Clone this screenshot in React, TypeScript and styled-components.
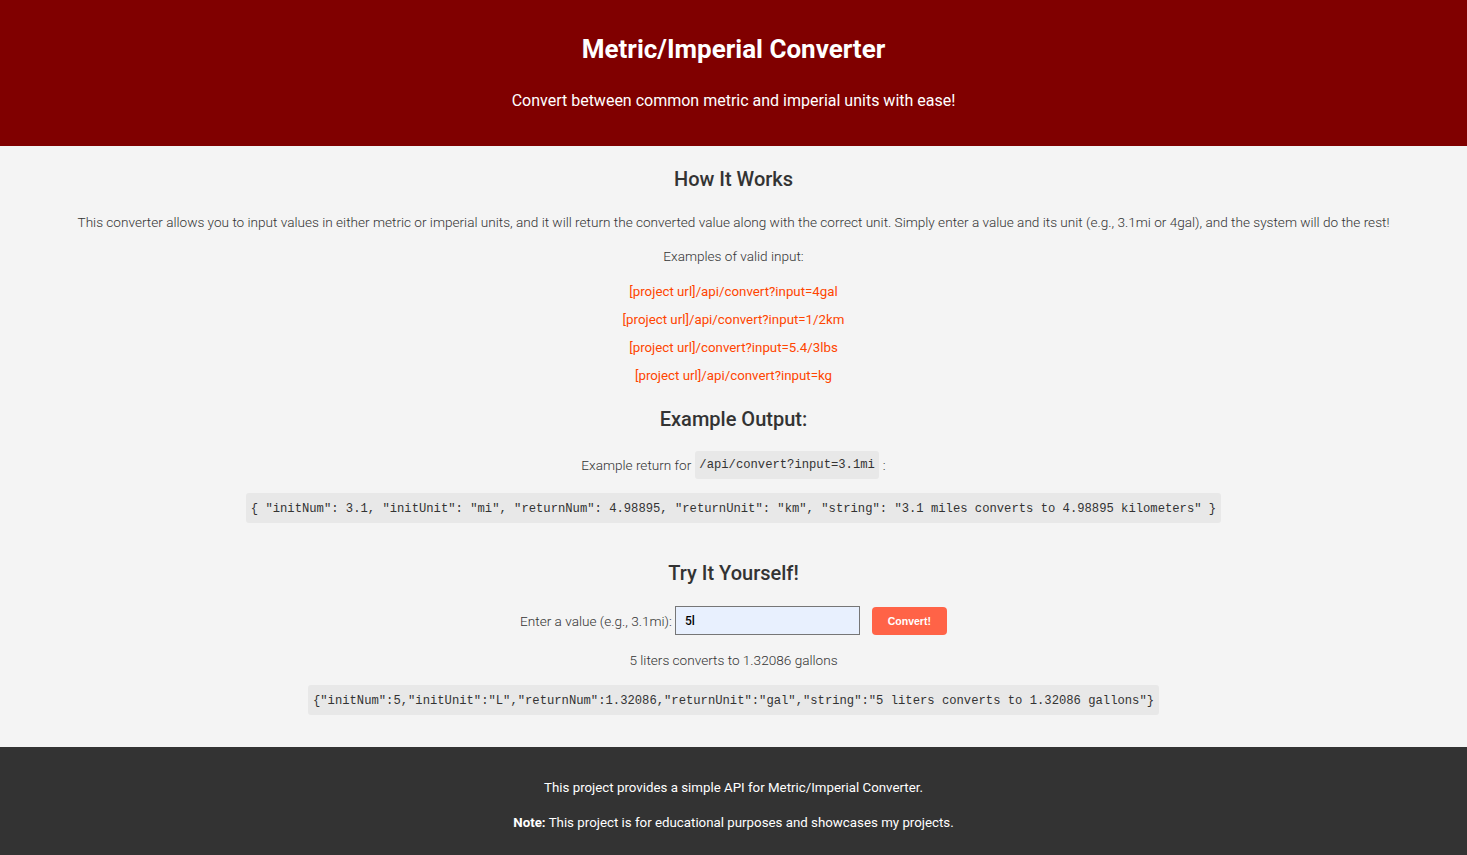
import styled, { createGlobalStyle } from "styled-components";

const GlobalStyle = createGlobalStyle`
  * {
    box-sizing: border-box;
  }

  body {
    margin: 0;
    font-family: Roboto, "Liberation Sans", Arial, sans-serif;
    background-color: #f4f4f4;
    color: #333;
  }
`;

const Header = styled.header`
  background-color: #800000;
  color: #fff;
  text-align: center;
  padding: 32px 20px 35px;
`;

const Title = styled.h1`
  margin: 0;
  font-size: 26px;
  line-height: 34px;
  font-weight: 700;
`;

const Subtitle = styled.p`
  margin: 25px 0 0;
  font-size: 16px;
  line-height: 20px;
`;

const Main = styled.main`
  display: flex;
  flex-direction: column;
  align-items: center;
  text-align: center;
  padding: 21px 20px 32px;
`;

const SectionTitle = styled.h2<{ $top?: number }>`
  margin: ${(p) => p.$top ?? 0}px 0 0;
  font-size: 20px;
  line-height: 24px;
  font-weight: 500;
  color: #333;
`;

const Text = styled.p<{ $top: number }>`
  margin: ${(p) => p.$top}px 0 0;
  font-size: 13.6px;
  line-height: 16px;
  font-weight: 300;
  color: #333;
`;

const Examples = styled.ul`
  list-style: none;
  margin: 19px 0 0;
  padding: 0;
  display: flex;
  flex-direction: column;
  gap: 10px;
`;

const ExampleLink = styled.li`
  font-size: 13.3px;
  line-height: 18px;
  color: #ff4500;
`;

const ReturnRow = styled.p`
  margin: 20px 0 0;
  display: flex;
  align-items: center;
  gap: 4px;
  font-size: 13.6px;
  font-weight: 300;
  line-height: 16px;
`;

const InlineCode = styled.code`
  font-family: "Liberation Mono", "DejaVu Sans Mono", monospace;
  font-size: 12.2px;
  background-color: #e8e8e8;
  padding: 6px 4px;
  line-height: 16px;
  border-radius: 3px;
`;

const CodeBlock = styled.pre<{ $top: number }>`
  margin: ${(p) => p.$top}px 0 0;
  font-family: "Liberation Mono", "DejaVu Sans Mono", monospace;
  font-size: 12.2px;
  line-height: 16px;
  background-color: #e8e8e8;
  padding: 8px 5px 6px;
  border-radius: 3px;
  color: #333;
  white-space: pre;
`;

const Form = styled.form`
  margin: 21px 0 0;
  display: flex;
  align-items: center;
  font-size: 13.6px;
  font-weight: 300;
`;

const Label = styled.label`
  margin-right: 3px;
`;

const Input = styled.input`
  width: 185px;
  height: 29px;
  padding: 0 9px;
  border: 1px solid #767676;
  background-color: #e8f0fe;
  font-family: Roboto, "Liberation Sans", Arial, sans-serif;
  font-size: 12px;
  font-weight: 500;
  color: #000;
  outline: none;
`;

const Button = styled.button`
  margin-left: 12px;
  width: 75px;
  height: 28px;
  border: none;
  border-radius: 4px;
  background-color: #ff6347;
  color: #fff;
  font-family: "Liberation Sans", Arial, sans-serif;
  font-size: 10.5px;
  font-weight: 700;
  cursor: pointer;
`;

const Footer = styled.footer`
  background-color: #333;
  color: #fff;
  text-align: center;
  padding: 33px 20px 24px;
  font-size: 13.3px;
  line-height: 16px;
`;

const FooterText = styled.p<{ $top: number }>`
  margin: ${(p) => p.$top}px 0 0;
`;

const examples = [
  "[project url]/api/convert?input=4gal",
  "[project url]/api/convert?input=1/2km",
  "[project url]/convert?input=5.4/3lbs",
  "[project url]/api/convert?input=kg",
];

export default function App() {
  return (
    <>
      <GlobalStyle />
      <Header>
        <Title>Metric/Imperial Converter</Title>
        <Subtitle>Convert between common metric and imperial units with ease!</Subtitle>
      </Header>
      <Main>
        <SectionTitle>How It Works</SectionTitle>
        <Text $top={23}>
          This converter allows you to input values in either metric or imperial units, and it will
          return the converted value along with the correct unit. Simply enter a value and its unit
          (e.g., 3.1mi or 4gal), and the system will do the rest!
        </Text>
        <Text $top={18}>Examples of valid input:</Text>
        <Examples>
          {examples.map((ex) => (
            <ExampleLink key={ex}>{ex}</ExampleLink>
          ))}
        </Examples>
        <SectionTitle $top={22}>Example Output:</SectionTitle>
        <ReturnRow>
          Example return for <InlineCode>/api/convert?input=3.1mi</InlineCode>:
        </ReturnRow>
        <CodeBlock $top={14}>
          {'{ "initNum": 3.1, "initUnit": "mi", "returnNum": 4.98895, "returnUnit": "km", "string": "3.1 miles converts to 4.98895 kilometers" }'}
        </CodeBlock>
        <SectionTitle $top={38}>Try It Yourself!</SectionTitle>
        <Form onSubmit={(e) => e.preventDefault()}>
          <Label htmlFor="convert-input">Enter a value (e.g., 3.1mi):</Label>
          <Input id="convert-input" defaultValue="5l" />
          <Button type="submit">Convert!</Button>
        </Form>
        <Text $top={17}>5 liters converts to 1.32086 gallons</Text>
        <CodeBlock $top={17}>
          {'{"initNum":5,"initUnit":"L","returnNum":1.32086,"returnUnit":"gal","string":"5 liters converts to 1.32086 gallons"}'}
        </CodeBlock>
      </Main>
      <Footer>
        <FooterText $top={0}>This project provides a simple API for Metric/Imperial Converter.</FooterText>
        <FooterText $top={19}>
          <strong>Note:</strong> This project is for educational purposes and showcases my projects.
        </FooterText>
      </Footer>
    </>
  );
}
